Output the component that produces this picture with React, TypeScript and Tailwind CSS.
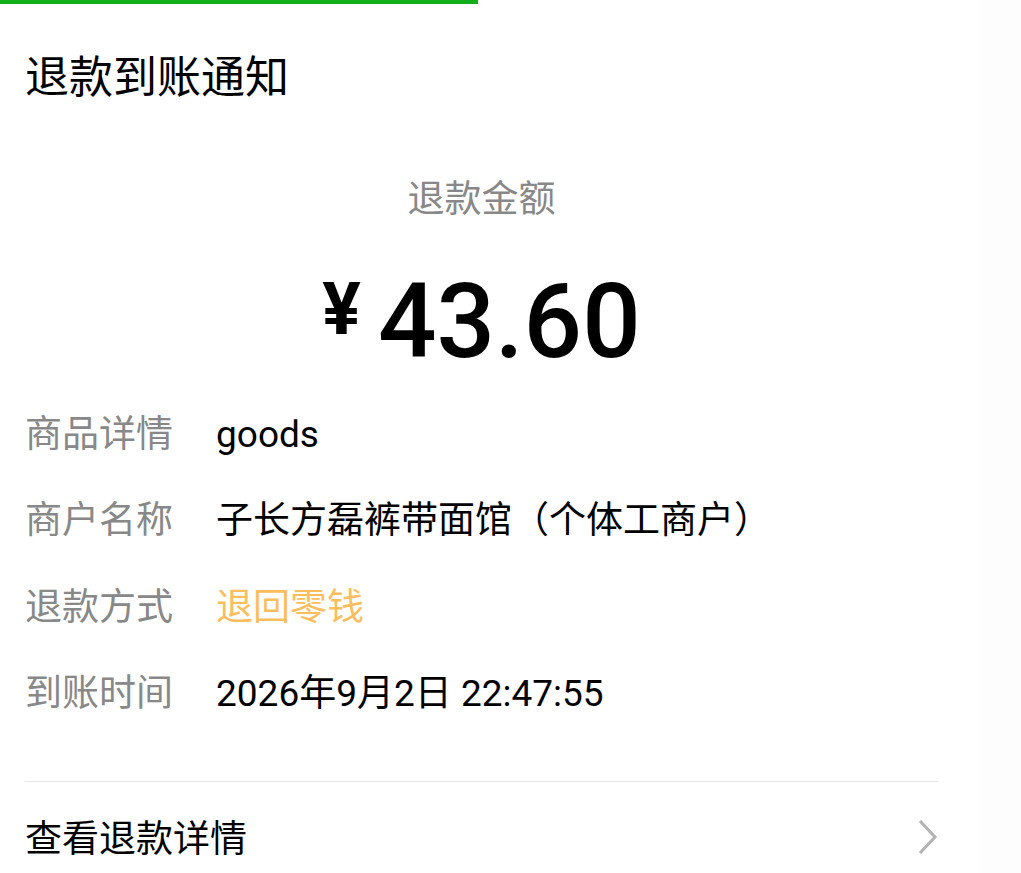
import React from "react";

const font = { fontFamily: 'Roboto, "Noto Sans CJK SC", sans-serif' };

type Row = { label: string; value: string; accent?: boolean };

const rows: Row[] = [
    { label: "商品详情", value: "goods" },
    { label: "商户名称", value: "子长方磊裤带面馆（个体工商户）" },
    { label: "退款方式", value: "退回零钱", accent: true },
    { label: "到账时间", value: "2026年9月2日 22:47:55" },
];

export default function App() {
    return (
        <div className="flex min-h-[873px] bg-white" style={font}>
            <div className="flex-1">
                {/* loading bar */}
                <div className="h-[4px] w-[478px] bg-[#12ad1b]" />

                <div className="w-[938px] pl-[25px]">
                    <div className="mt-[44px] h-[60px] text-[44px] leading-[60px] text-black">
                        退款到账通知
                    </div>

                    <div className="mt-[67px] h-[50px] text-center text-[37px] leading-[50px] text-[#888888]">
                        退款金额
                    </div>

                    <div className="mt-[45px] flex items-start justify-center text-black">
                        <span className="mt-[4px] mr-[17px] text-[72px] font-bold leading-none">¥</span>
                        <span className="text-[103px] font-medium leading-none">43.60</span>
                    </div>

                    <div className="mt-[18px]">
                        {rows.map((row) => (
                            <div key={row.label} className="flex h-[86.5px] items-center text-[37px]">
                                <div className="w-[191px] text-[#888888]">{row.label}</div>
                                <div className={row.accent ? "text-[#fbbe5e]" : "text-black"}>
                                    {row.value}
                                </div>
                            </div>
                        ))}
                    </div>

                    <div className="mt-[44px] h-px bg-[#e5e5e5]" />

                    <div className="flex h-[110px] items-center justify-between pt-[6px]">
                        <span className="text-[37px] text-black">查看退款详情</span>
                        <svg width="20" height="34" viewBox="0 0 20 34" className="-mt-[6px]">
                            <polyline
                                points="2,1 17,17 2,33"
                                fill="none"
                                stroke="#b3b3b3"
                                strokeWidth="3"
                            />
                        </svg>
                    </div>
                </div>
            </div>
            <div className="w-[41px] bg-[#fdfdfd]" />
        </div>
    );
}
